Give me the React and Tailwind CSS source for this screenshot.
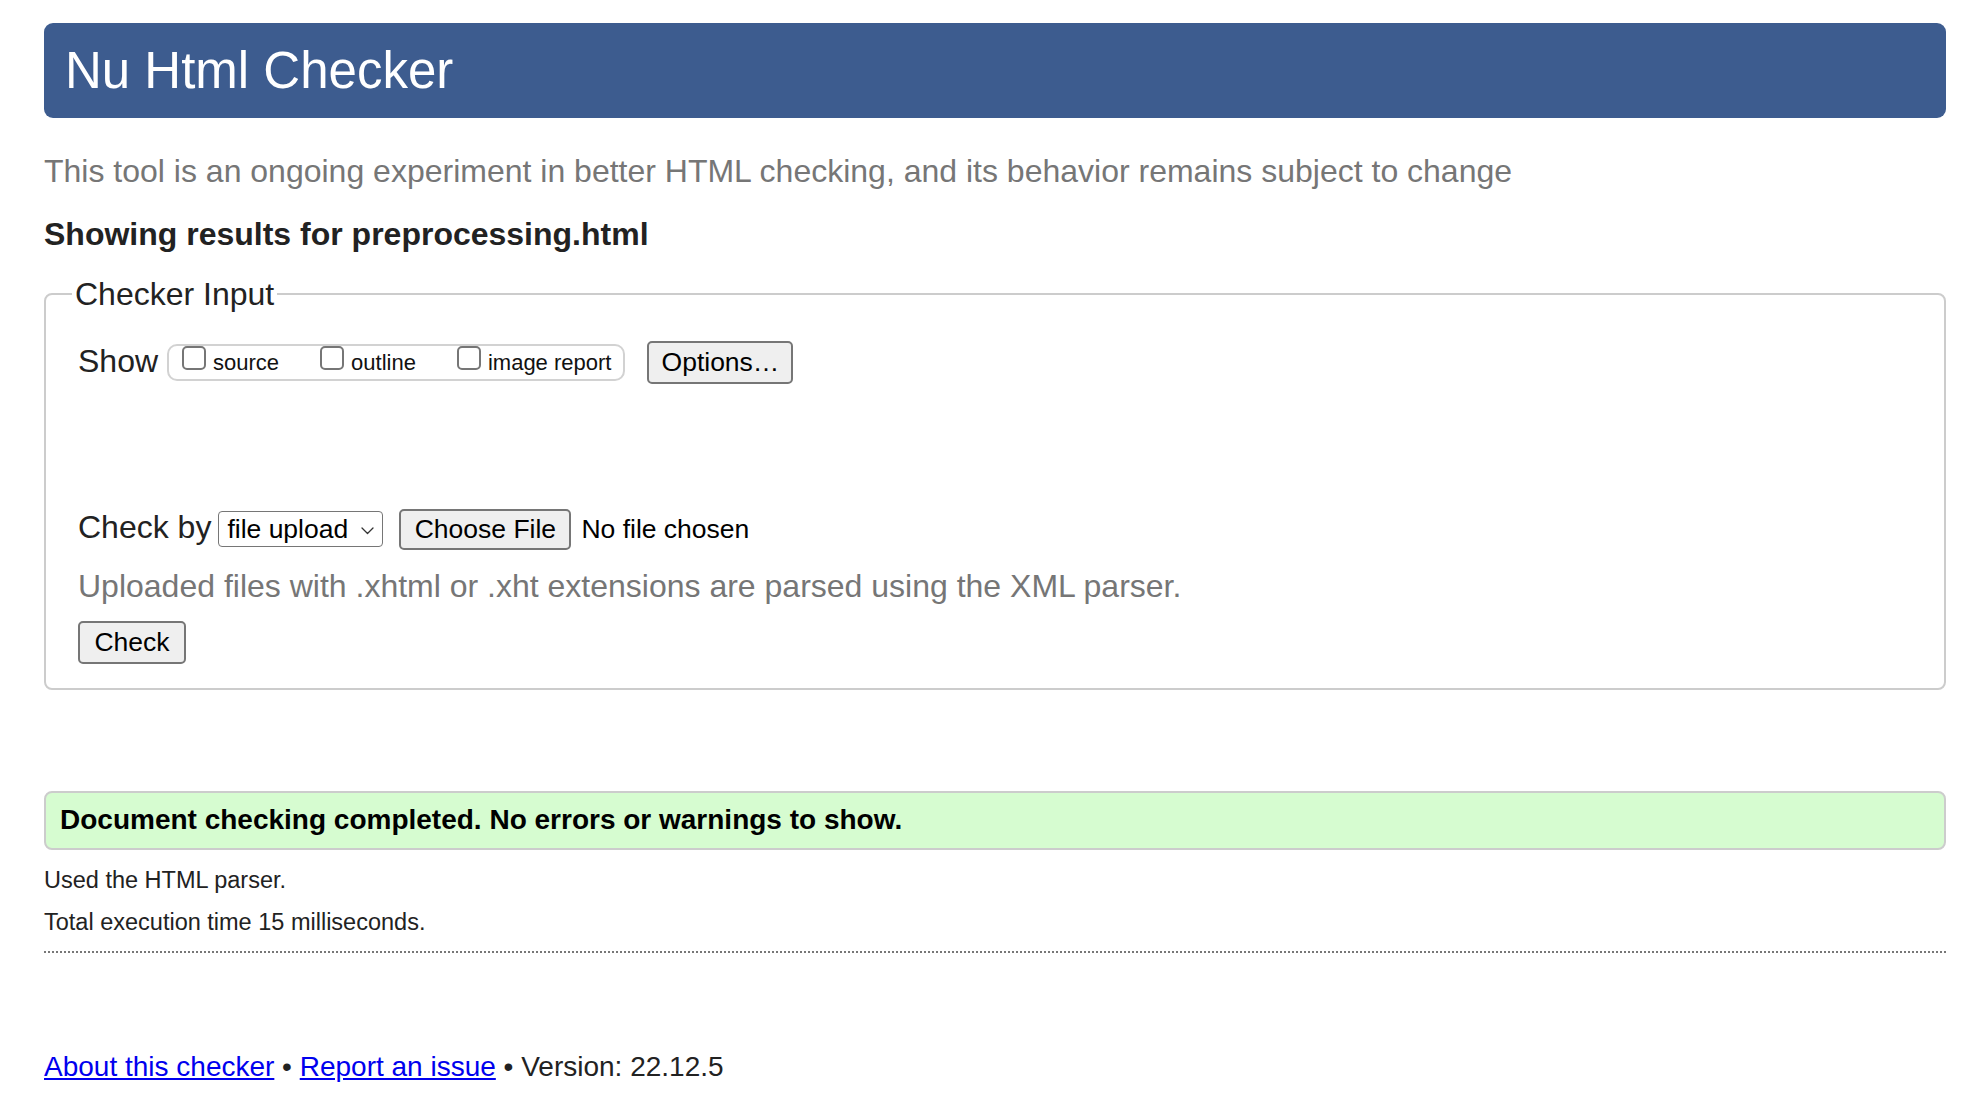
import React from "react";

function Checkbox({ label, first }) {
  return (
    <span className={`flex items-baseline ${first ? "" : "ml-[41px]"}`}>
      <span className="inline-block w-[24px] h-[24px] border-2 border-[#767676] rounded-[5px] bg-white"></span>
      <span className="ml-[7px] text-[22px] leading-[24px] text-[#111]">{label}</span>
    </span>
  );
}

export default function App() {
  return (
    <div className="min-h-screen bg-white pl-[44px] pr-[21px] pt-[23px] pb-[20px] font-['Liberation_Sans',Arial,Helvetica,sans-serif] text-[#222]">
      <header className="h-[95px] rounded-[9px] bg-[#3d5c8f] flex items-center pl-[21px]">
        <h1 className="text-[51px] leading-none text-white font-normal">Nu Html Checker</h1>
      </header>

      <p className="mt-[33px] text-[32px] leading-[40px] text-[#767676]">
        This tool is an ongoing experiment in better HTML checking, and its behavior remains subject to change
      </p>

      <p className="mt-[23px] text-[32px] leading-[40px] font-bold text-[#222]">
        Showing results for preprocessing.html
      </p>

      <fieldset className="mt-[20px] border-2 border-[#cccccc] rounded-[8px] pl-[26px] pr-[26px] pb-[24px]">
        <legend className="px-[3px] text-[32px] leading-[40px] text-[#222]">Checker Input</legend>
        <div className="pl-[6px]">
          <div className="mt-[27px] flex items-center h-[43px]">
            <span className="mb-[4px] text-[32px] leading-[40px] text-[#222]">Show</span>
            <div className="ml-[9px] h-[37px] border-2 border-[#d2d2d2] rounded-[10px] pl-[13px] pr-[12px] flex items-start">
              <Checkbox label="source" first />
              <Checkbox label="outline" />
              <Checkbox label="image report" />
            </div>
            <button className="ml-[22px] w-[146px] h-[43px] border-2 border-[#767676] rounded-[5px] bg-[#efefef] text-[26.5px] leading-none text-black">
              Options…
            </button>
          </div>

          <div className="mt-[123px] flex items-baseline">
            <span className="text-[32px] leading-[40px] text-[#222]">Check by</span>
            <div className="ml-[7px] flex items-center justify-between h-[36px] w-[165px] border-[1.5px] border-[#767676] rounded-[4px] pl-[8px] pr-[8px] bg-white">
              <span className="text-[26.5px] leading-none text-black">file upload</span>
              <svg width="13" height="8" viewBox="0 0 13 8" className="mt-[3px]">
                <path d="M1 1 L6.5 6.5 L12 1" fill="none" stroke="#333" strokeWidth="1.3" strokeLinecap="round" strokeLinejoin="round" />
              </svg>
            </div>
            <button className="ml-[16px] w-[172px] h-[41px] border-2 border-[#767676] rounded-[5px] bg-[#efefef] text-[26.5px] leading-none text-black">
              Choose File
            </button>
            <span className="ml-[10px] text-[26.5px] leading-none text-black">No file chosen</span>
          </div>

          <p className="mt-[16px] text-[32px] leading-[40px] text-[#767676]">
            Uploaded files with .xhtml or .xht extensions are parsed using the XML parser.
          </p>

          <button className="mt-[15px] block w-[108px] h-[43px] border-2 border-[#767676] rounded-[5px] bg-[#efefef] text-[26.5px] leading-none text-black">
            Check
          </button>
        </div>
      </fieldset>

      <div className="mt-[101px] h-[59px] border-2 border-[#cccccc] rounded-[8px] bg-[#d6fcd0] flex items-center pl-[14px]">
        <span className="text-[28px] leading-none font-bold text-black">
          Document checking completed. No errors or warnings to show.
        </span>
      </div>

      <p className="mt-[15px] text-[23.5px] leading-[30px] text-[#222]">Used the HTML parser.</p>
      <p className="mt-[12px] text-[23.5px] leading-[30px] text-[#222]">Total execution time 15 milliseconds.</p>

      <div className="mt-[14px] h-0 border-t-2 border-dotted border-[#777]"></div>

      <p className="mt-[97px] text-[28px] leading-[34px] text-[#222]">
        <a href="#" className="text-[#0000ee] underline">About this checker</a>
        {" • "}
        <a href="#" className="text-[#0000ee] underline">Report an issue</a>
        {" • Version: 22.12.5"}
      </p>
    </div>
  );
}
